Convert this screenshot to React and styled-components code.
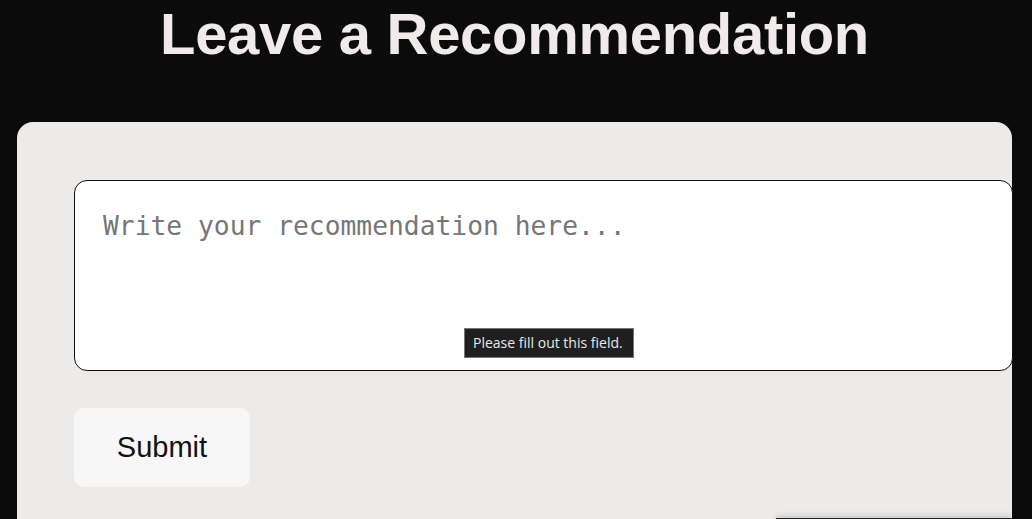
import React from "react";
import styled, { createGlobalStyle } from "styled-components";

const Global = createGlobalStyle`
  html, body { margin: 0; padding: 0; background: #0b0b0b; }
  body { font-family: "Liberation Sans", Arial, sans-serif; overflow: hidden; }
  * { box-sizing: content-box; }
`;

const Page = styled.div`
  position: relative;
  height: 519px;
  overflow: hidden;
  padding: 0 20px 0 17px;
  display: flex;
  flex-direction: column;
`;

const Title = styled.h1`
  margin: 0;
  padding: 0;
  height: 122px;
  flex-shrink: 0;
  font-size: 58px;
  line-height: normal;
  font-weight: 700;
  color: #f1eaea;
  text-align: center;
  letter-spacing: -0.3px;
`;

const Card = styled.form`
  background: #ecebe9;
  border-radius: 16px;
  padding: 58px 57px 40px;
  display: flex;
  flex-direction: column;
  align-items: flex-start;
  gap: 37px;
  flex-shrink: 0;
  height: 380px;
`;

const FieldWrap = styled.div`
  position: relative;
  width: 100%;
`;

const TextArea = styled.textarea`
  display: block;
  width: 100%;
  height: 131px;
  padding: 29px 28px;
  border: 1px solid #111;
  border-radius: 13px;
  background: #fff;
  resize: none;
  font-family: "DejaVu Sans Mono", monospace;
  font-size: 26.3px;
  line-height: 32px;
  color: #222;
  outline: none;
  &::placeholder { color: #767676; }
`;

const Tip = styled.div`
  position: absolute;
  left: 390px;
  top: 148px;
  height: 28px;
  background: #1f1f1f;
  border: 1px solid #767676;
  color: #e8e8e8;
  font-family: "Open Sans", "Noto Sans", sans-serif;
  font-size: 14px;
  line-height: 28px;
  padding: 0 10px 0 8px;
  white-space: nowrap;
`;

const Button = styled.button`
  width: 176px;
  height: 79px;
  padding: 0;
  border: none;
  border-radius: 10px;
  background: #f7f7f7;
  color: #111;
  font-family: "Liberation Sans", Arial, sans-serif;
  font-size: 29px;
  cursor: pointer;
`;

const Peek = styled.div`
  position: absolute;
  left: 776px;
  top: 518px;
  width: 236px;
  height: 20px;
  background: #242424;
  box-shadow: 0 -2px 6px rgba(0,0,0,0.15);
`;

export default function App() {
  return (
    <>
      <Global />
      <Page>
        <Title>Leave a Recommendation</Title>
        <Card onSubmit={(e) => e.preventDefault()}>
          <FieldWrap>
            <TextArea placeholder="Write your recommendation here..." />
            <Tip>Please fill out this field.</Tip>
          </FieldWrap>
          <Button type="submit">Submit</Button>
        </Card>
        <Peek />
      </Page>
    </>
  );
}
